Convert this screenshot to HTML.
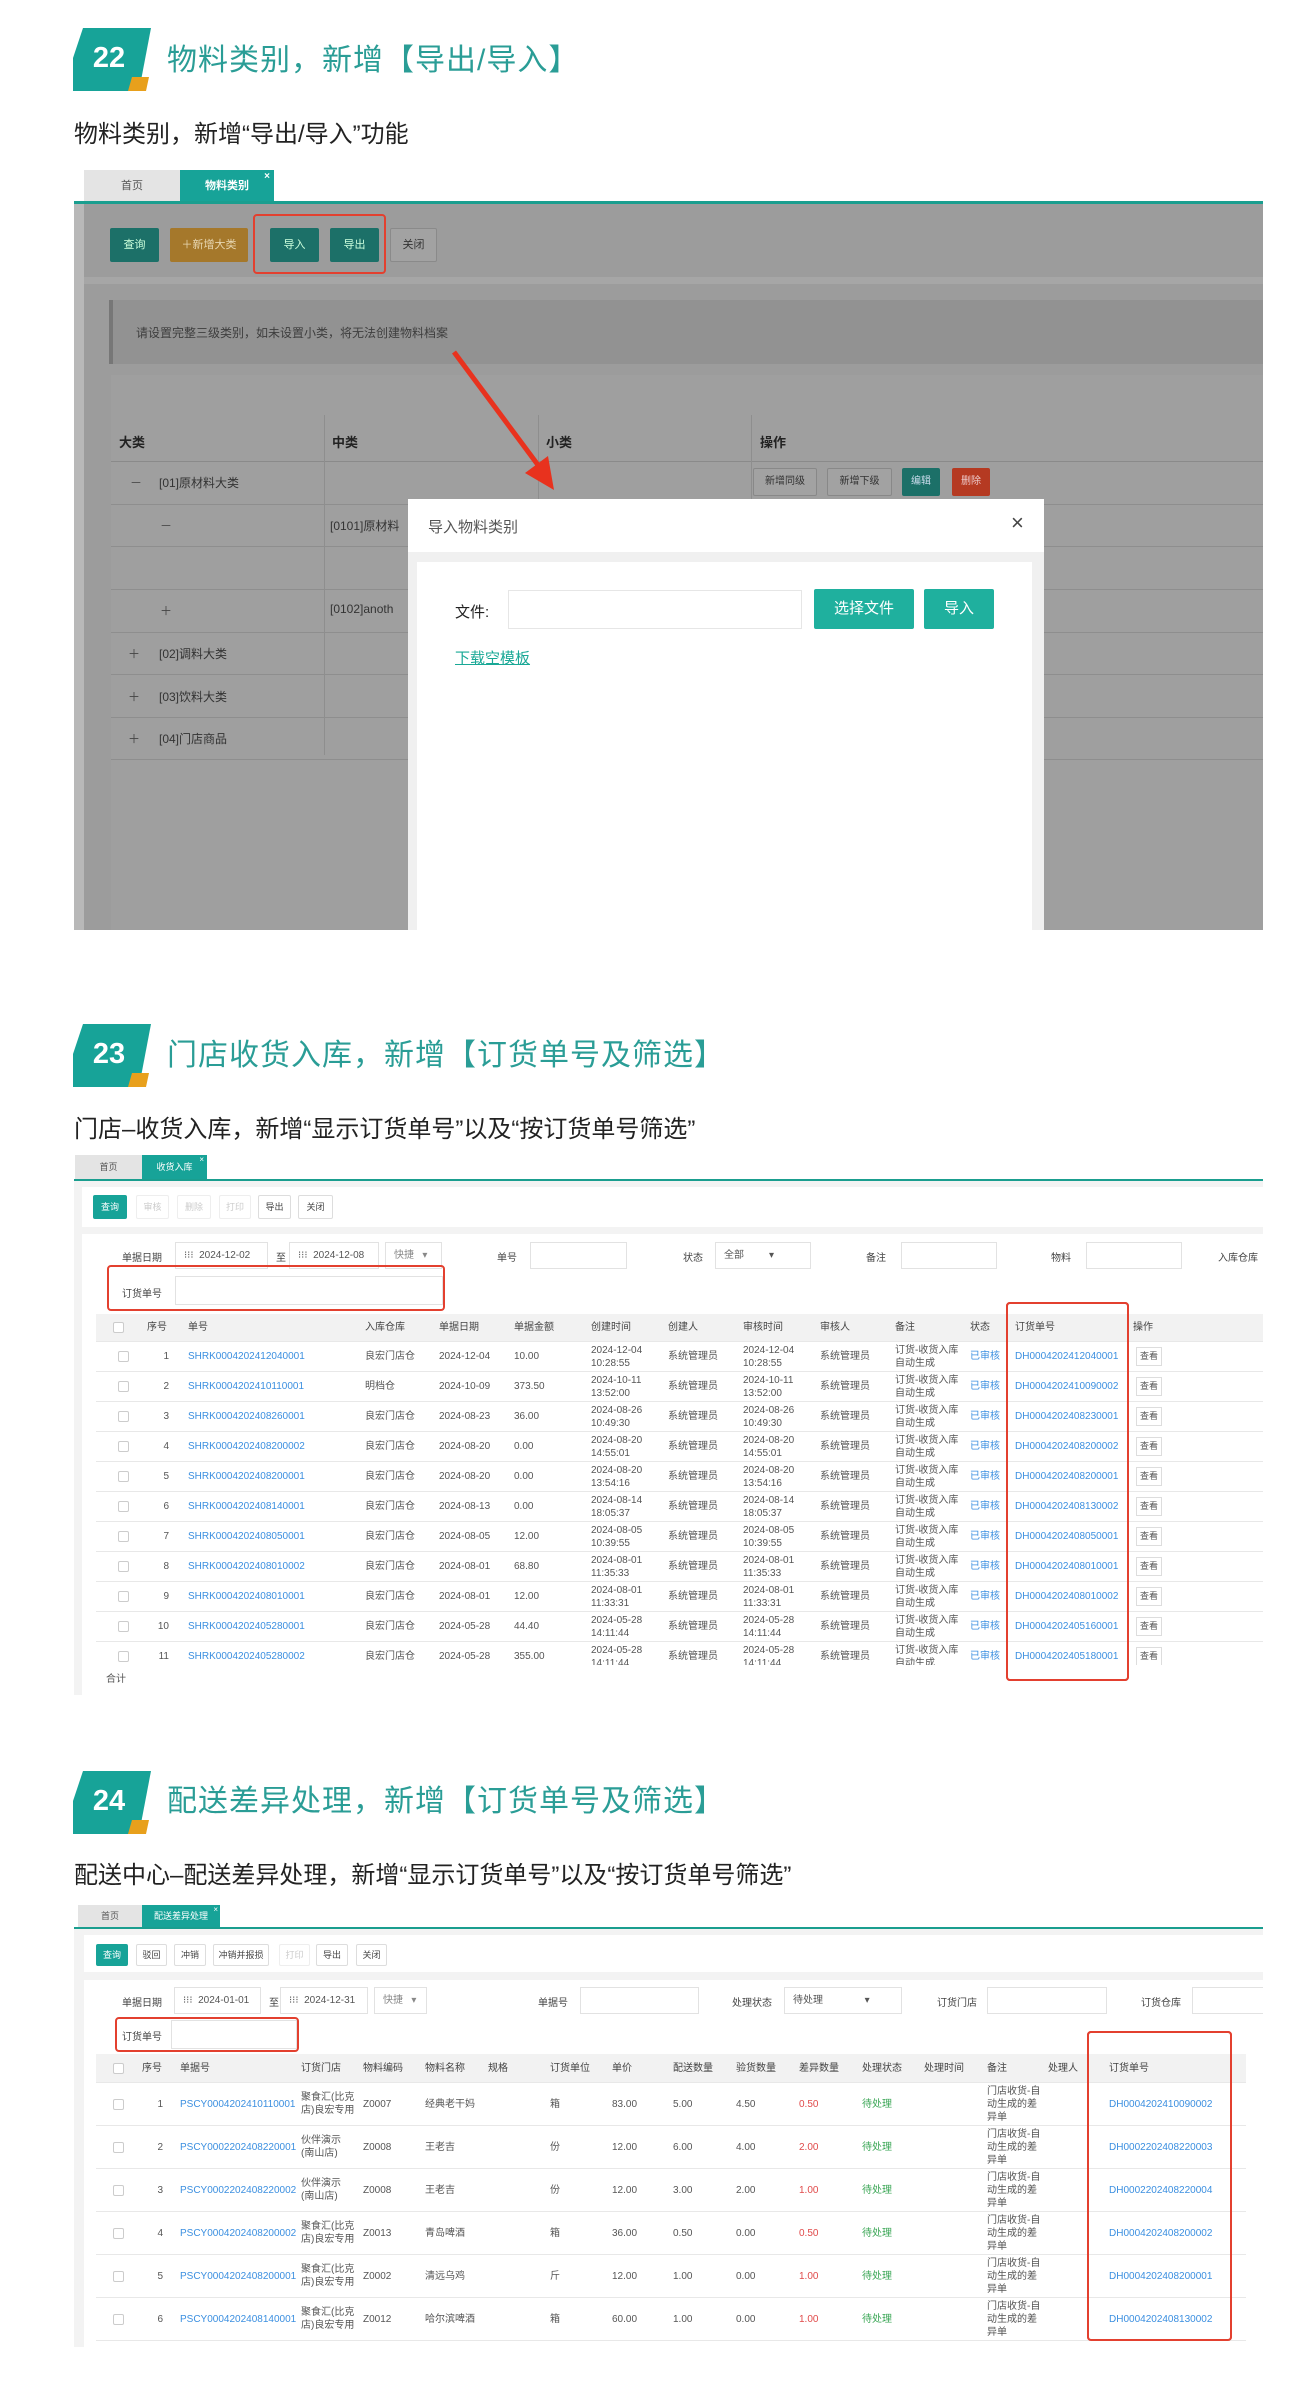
<!DOCTYPE html>
<html><head><meta charset="utf-8">
<style>
*{margin:0;padding:0;box-sizing:border-box}
body{width:1305px;height:2391px;background:#fff;position:relative;overflow:hidden;font-family:"Liberation Sans","Noto Sans CJK SC",sans-serif;color:#333}
.a{position:absolute;white-space:nowrap}
.badge{position:absolute;width:78px;height:63px}
.badge .t{position:absolute;left:0;top:0;width:78px;height:63px;background:#17a398;clip-path:polygon(10px 0,78px 0,66px 63px,0 63px,0 30px)}
.badge .o{position:absolute;left:55px;top:49px;width:21px;height:14px;background:#e8a01c;clip-path:polygon(4px 0,21px 0,18px 14px,0 14px)}
.badge span{position:absolute;left:0;width:72px;top:14px;text-align:center;color:#fff;font-weight:bold;font-size:29px}
.title{position:absolute;left:167px;font-size:30px;color:#2a9d96;letter-spacing:1px;white-space:nowrap;line-height:36px}
.sub{position:absolute;left:74px;font-size:24px;color:#222;white-space:nowrap;line-height:30px}
.tab{position:absolute;font-size:11px;text-align:center;color:#555;background:#e4e4e4}
.tab.on{background:#17a398;color:#fff}
.btn{position:absolute;font-size:11px;text-align:center;border:1px solid #ddd;background:#fff;color:#444;border-radius:2px}
.red{position:absolute;border:2px solid #e3402f;border-radius:4px}
.row{position:absolute;display:grid;align-items:center;font-size:10px;color:#555;border-bottom:1px solid #e8e8e8;line-height:13px}
.row>div{padding-left:5px;overflow:hidden;white-space:nowrap}
.lk{color:#3b8fe0}
.cb{width:11px;height:11px;border:1px solid #ccc;border-radius:2px;background:#fff;margin-left:17px}
.inp{position:absolute;border:1px solid #e2e2e2;background:#fff;font-size:10px;color:#555;padding-left:8px}
.lab{position:absolute;font-size:10px;color:#444;white-space:nowrap}
.g{color:#3aa655}.r{color:#e04a4a}
.vb{border:1px solid #ddd;font-size:9px;padding:2px 3px!important;background:#fff;display:inline-block;margin-left:3px}
</style></head><body>

<!-- ===== Section 22 ===== -->
<div class="badge" style="left:73px;top:28px"><div class="t"></div><div class="o"></div><span>22</span></div>
<div class="title" style="top:43px">物料类别，新增【导出/导入】</div>
<div class="sub" style="top:120px">物料类别，新增“导出/导入”功能</div>

<div class="tab" style="left:84px;top:170px;width:96px;height:33px;line-height:33px">首页</div>
<div class="tab on" style="left:180px;top:170px;width:94px;height:33px;line-height:33px;font-weight:bold">物料类别<span style="position:absolute;right:4px;top:-10px;font-size:10px">×</span></div>
<div class="a" style="left:74px;top:201px;width:1189px;height:3px;background:#1a9e8f"></div>
<div class="a" style="left:74px;top:204px;width:1189px;height:726px;background:#9c9c9c"></div>
<div class="a" style="left:74px;top:204px;width:10px;height:726px;background:#b8b8b8"></div>
<div class="a" style="left:84px;top:277px;width:1179px;height:7px;background:#a6a6a6"></div>
<div class="btn" style="left:110px;top:228px;width:49px;height:34px;line-height:32px;background:#1c7068;border-color:#1c7068;color:#cfd">查询</div>
<div class="btn" style="left:170px;top:228px;width:78px;height:34px;line-height:32px;background:#a5782b;border-color:#a5782b;color:#e7d6b0">＋新增大类</div>
<div class="btn" style="left:270px;top:228px;width:49px;height:34px;line-height:32px;background:#1c7068;border-color:#1c7068;color:#cfd">导入</div>
<div class="btn" style="left:330px;top:228px;width:49px;height:34px;line-height:32px;background:#1c7068;border-color:#1c7068;color:#cfd">导出</div>
<div class="btn" style="left:390px;top:228px;width:47px;height:34px;line-height:32px;background:#a2a2a2;border-color:#8a8a8a;color:#333">关闭</div>
<div class="red" style="left:253px;top:214px;width:133px;height:60px"></div>
<div class="a" style="left:109px;top:300px;width:1154px;height:64px;background:#929292;border-left:4px solid #777"></div>
<div class="a" style="left:136px;top:324px;font-size:12px;color:#3e3e3e">请设置完整三级类别，如未设置小类，将无法创建物料档案</div>
<div class="a" style="left:111px;top:375px;width:1152px;height:555px;background:#9f9f9f"></div>
<div class="a" style="left:111px;top:461px;width:1152px;height:1px;background:#8a8a8a"></div>
<div class="a" style="left:324px;top:415px;width:1px;height:340px;background:#8e8e8e"></div>
<div class="a" style="left:538px;top:415px;width:1px;height:90px;background:#8e8e8e"></div>
<div class="a" style="left:751px;top:415px;width:1px;height:90px;background:#8e8e8e"></div>
<div class="a" style="left:119px;top:432px;font-size:13px;font-weight:bold;color:#222">大类</div>
<div class="a" style="left:332px;top:432px;font-size:13px;font-weight:bold;color:#222">中类</div>
<div class="a" style="left:546px;top:432px;font-size:13px;font-weight:bold;color:#222">小类</div>
<div class="a" style="left:760px;top:432px;font-size:13px;font-weight:bold;color:#222">操作</div>
<div class="a" style="left:111px;top:504px;width:1152px;height:1px;background:#8e8e8e"></div>
<div class="a" style="left:111px;top:546px;width:1152px;height:1px;background:#8e8e8e"></div>
<div class="a" style="left:111px;top:589px;width:1152px;height:1px;background:#8e8e8e"></div>
<div class="a" style="left:111px;top:632px;width:1152px;height:1px;background:#8e8e8e"></div>
<div class="a" style="left:111px;top:674px;width:1152px;height:1px;background:#8e8e8e"></div>
<div class="a" style="left:111px;top:717px;width:1152px;height:1px;background:#8e8e8e"></div>
<div class="a" style="left:111px;top:759px;width:1152px;height:1px;background:#8e8e8e"></div>
<div class="a" style="left:130px;top:474px;font-size:12px;color:#444">－</div><div class="a" style="left:159px;top:474px;font-size:12px;color:#333">[01]原材料大类</div>
<div class="a" style="left:160px;top:517px;font-size:12px;color:#444">－</div><div class="a" style="left:330px;top:517px;font-size:12px;color:#333">[0101]原材料</div>
<div class="a" style="left:160px;top:602px;font-size:12px;color:#444">＋</div><div class="a" style="left:330px;top:602px;font-size:12px;color:#333">[0102]anoth</div>
<div class="a" style="left:128px;top:645px;font-size:12px;color:#444">＋</div><div class="a" style="left:159px;top:645px;font-size:12px;color:#333">[02]调料大类</div>
<div class="a" style="left:128px;top:688px;font-size:12px;color:#444">＋</div><div class="a" style="left:159px;top:688px;font-size:12px;color:#333">[03]饮料大类</div>
<div class="a" style="left:128px;top:730px;font-size:12px;color:#444">＋</div><div class="a" style="left:159px;top:730px;font-size:12px;color:#333">[04]门店商品</div>
<div class="btn" style="left:753px;top:468px;width:64px;height:28px;line-height:26px;background:#a2a2a2;border-color:#888;color:#333;font-size:10px">新增同级</div>
<div class="btn" style="left:827px;top:468px;width:65px;height:28px;line-height:26px;background:#a2a2a2;border-color:#888;color:#333;font-size:10px">新增下级</div>
<div class="btn" style="left:902px;top:468px;width:38px;height:28px;line-height:26px;background:#1c7068;border-color:#1c7068;color:#cde;font-size:10px">编辑</div>
<div class="btn" style="left:952px;top:468px;width:38px;height:28px;line-height:26px;background:#b53a22;border-color:#b53a22;color:#ecc;font-size:10px">删除</div>
<svg class="a" style="left:0;top:0" width="1305" height="940">
<line x1="454" y1="352" x2="538" y2="465" stroke="#e8321e" stroke-width="5"/>
<polygon points="554,490 525,473 548,456" fill="#e8321e"/>
</svg>
<!-- modal -->
<div class="a" style="left:408px;top:499px;width:636px;height:431px;background:#f0f0f0"></div>
<div class="a" style="left:408px;top:499px;width:636px;height:53px;background:#fff"></div>
<div class="a" style="left:428px;top:516px;font-size:15px;color:#555">导入物料类别</div>
<div class="a" style="left:1011px;top:510px;font-size:22px;color:#444">×</div>
<div class="a" style="left:417px;top:562px;width:615px;height:368px;background:#fff"></div>
<div class="a" style="left:455px;top:601px;font-size:15px;color:#222">文件:</div>
<div class="a" style="left:508px;top:590px;width:294px;height:39px;border:1px solid #e6e6e6;background:#fff"></div>
<div class="btn" style="left:814px;top:589px;width:100px;height:40px;line-height:38px;background:#1fb09e;border-color:#1fb09e;color:#fff;font-size:15px">选择文件</div>
<div class="btn" style="left:924px;top:589px;width:70px;height:40px;line-height:38px;background:#1fb09e;border-color:#1fb09e;color:#fff;font-size:15px">导入</div>
<div class="a" style="left:455px;top:647px;font-size:15px;color:#19a896;text-decoration:underline">下载空模板</div>

<!-- ===== Section 23 ===== -->
<div class="badge" style="left:73px;top:1024px"><div class="t"></div><div class="o"></div><span>23</span></div>
<div class="title" style="top:1038px">门店收货入库，新增【订货单号及筛选】</div>
<div class="sub" style="top:1115px">门店–收货入库，新增“显示订货单号”以及“按订货单号筛选”</div>

<div style="position:absolute;left:0;top:0;width:1305px;height:2391px;clip-path:inset(1150px 42px 696px 74px)">
<div class="a" style="left:74px;top:1181px;width:1189px;height:520px;background:#f3f3f3"></div>
<div class="tab" style="left:75px;top:1155px;width:67px;height:24px;line-height:24px;font-size:9px">首页</div>
<div class="tab on" style="left:142px;top:1155px;width:65px;height:24px;line-height:24px;font-size:9px">收货入库<span style="position:absolute;right:3px;top:-7px;font-size:8px">×</span></div>
<div class="a" style="left:74px;top:1179px;width:1189px;height:2px;background:#1a9e8f"></div>
<div class="a" style="left:82px;top:1187px;width:1181px;height:40px;background:#fff"></div>
<div class="btn" style="left:93px;top:1195px;width:34px;height:24px;line-height:22px;background:#17a398;border-color:#17a398;color:#fff;font-size:9px">查询</div>
<div class="btn" style="left:136px;top:1195px;width:33px;height:24px;line-height:22px;color:#ccc;border-color:#eee;font-size:9px">审核</div>
<div class="btn" style="left:177px;top:1195px;width:34px;height:24px;line-height:22px;color:#ccc;border-color:#eee;font-size:9px">删除</div>
<div class="btn" style="left:219px;top:1195px;width:32px;height:24px;line-height:22px;color:#ccc;border-color:#eee;font-size:9px">打印</div>
<div class="btn" style="left:258px;top:1195px;width:33px;height:24px;line-height:22px;font-size:9px">导出</div>
<div class="btn" style="left:298px;top:1195px;width:35px;height:24px;line-height:22px;font-size:9px">关闭</div>
<div class="a" style="left:82px;top:1234px;width:1181px;height:470px;background:#fff"></div>
<div class="lab" style="left:122px;top:1249px">单据日期</div>
<div class="inp" style="left:175px;top:1242px;width:93px;height:27px;line-height:25px">⁝⁝⁝ &nbsp;2024-12-02</div>
<div class="lab" style="left:276px;top:1249px">至</div>
<div class="inp" style="left:289px;top:1242px;width:90px;height:27px;line-height:25px">⁝⁝⁝ &nbsp;2024-12-08</div>
<div class="inp" style="left:385px;top:1242px;width:57px;height:27px;line-height:25px;color:#888">快捷 &nbsp; ▾</div>
<div class="lab" style="left:497px;top:1249px">单号</div>
<div class="inp" style="left:530px;top:1242px;width:97px;height:27px"></div>
<div class="lab" style="left:683px;top:1249px">状态</div>
<div class="inp" style="left:715px;top:1242px;width:96px;height:27px;line-height:25px">全部 &nbsp; &nbsp; &nbsp; &nbsp; ▾</div>
<div class="lab" style="left:866px;top:1249px">备注</div>
<div class="inp" style="left:901px;top:1242px;width:96px;height:27px"></div>
<div class="lab" style="left:1051px;top:1249px">物料</div>
<div class="inp" style="left:1086px;top:1242px;width:96px;height:27px"></div>
<div class="lab" style="left:1218px;top:1249px">入库仓库</div>
<div class="lab" style="left:122px;top:1285px">订货单号</div>
<div class="inp" style="left:175px;top:1276px;width:268px;height:29px"></div>
<div class="red" style="left:107px;top:1265px;width:338px;height:46px"></div>

<div class="row" style="left:96px;top:1314px;width:1167px;height:28px;background:#f2f2f2;color:#444;grid-template-columns:46px 41px 177px 74px 75px 77px 77px 75px 77px 75px 75px 45px 118px 135px"><div><div class="cb" style="margin-left:12px"></div></div><div>序号</div><div>单号</div><div>入库仓库</div><div>单据日期</div><div>单据金额</div><div>创建时间</div><div>创建人</div><div>审核时间</div><div>审核人</div><div>备注</div><div>状态</div><div>订货单号</div><div>操作</div></div>
<div id="t23"></div>
<div class="a" style="left:96px;top:1670px;font-size:10px;color:#555;left:106px">合计</div>
</div>
<div class="red" style="left:1006px;top:1302px;width:123px;height:379px"></div>

<!-- ===== Section 24 ===== -->
<div class="badge" style="left:73px;top:1771px"><div class="t"></div><div class="o"></div><span>24</span></div>
<div class="title" style="top:1784px">配送差异处理，新增【订货单号及筛选】</div>
<div class="sub" style="top:1861px">配送中心–配送差异处理，新增“显示订货单号”以及“按订货单号筛选”</div>

<div style="position:absolute;left:0;top:0;width:1305px;height:2391px;clip-path:inset(1900px 42px 44px 74px)">
<div class="a" style="left:74px;top:1929px;width:1189px;height:420px;background:#f3f3f3"></div>
<div class="tab" style="left:78px;top:1905px;width:64px;height:23px;line-height:23px;font-size:9px">首页</div>
<div class="tab on" style="left:142px;top:1905px;width:78px;height:23px;line-height:23px;font-size:9px">配送差异处理<span style="position:absolute;right:2px;top:-7px;font-size:8px">×</span></div>
<div class="a" style="left:74px;top:1927px;width:1189px;height:2px;background:#1a9e8f"></div>
<div class="a" style="left:84px;top:1935px;width:1179px;height:37px;background:#fff"></div>
<div class="btn" style="left:96px;top:1944px;width:32px;height:22px;line-height:20px;background:#17a398;border-color:#17a398;color:#fff;font-size:9px">查询</div>
<div class="btn" style="left:136px;top:1944px;width:31px;height:22px;line-height:20px;font-size:9px">驳回</div>
<div class="btn" style="left:174px;top:1944px;width:32px;height:22px;line-height:20px;font-size:9px">冲销</div>
<div class="btn" style="left:213px;top:1944px;width:56px;height:22px;line-height:20px;font-size:9px">冲销并报损</div>
<div class="btn" style="left:279px;top:1944px;width:31px;height:22px;line-height:20px;font-size:9px;color:#ccc;border-color:#eee">打印</div>
<div class="btn" style="left:316px;top:1944px;width:32px;height:22px;line-height:20px;font-size:9px">导出</div>
<div class="btn" style="left:356px;top:1944px;width:31px;height:22px;line-height:20px;font-size:9px">关闭</div>
<div class="a" style="left:84px;top:1980px;width:1179px;height:380px;background:#fff"></div>
<div class="lab" style="left:122px;top:1994px">单据日期</div>
<div class="inp" style="left:174px;top:1987px;width:87px;height:27px;line-height:25px">⁝⁝⁝ &nbsp;2024-01-01</div>
<div class="lab" style="left:269px;top:1994px">至</div>
<div class="inp" style="left:280px;top:1987px;width:88px;height:27px;line-height:25px">⁝⁝⁝ &nbsp;2024-12-31</div>
<div class="inp" style="left:374px;top:1987px;width:53px;height:27px;line-height:25px;color:#888">快捷 &nbsp; ▾</div>
<div class="lab" style="left:538px;top:1994px">单据号</div>
<div class="inp" style="left:580px;top:1987px;width:119px;height:27px"></div>
<div class="lab" style="left:732px;top:1994px">处理状态</div>
<div class="inp" style="left:784px;top:1987px;width:118px;height:27px;line-height:25px">待处理 &nbsp; &nbsp; &nbsp; &nbsp; &nbsp; &nbsp; &nbsp; ▾</div>
<div class="lab" style="left:937px;top:1994px">订货门店</div>
<div class="inp" style="left:987px;top:1987px;width:120px;height:27px"></div>
<div class="lab" style="left:1141px;top:1994px">订货仓库</div>
<div class="inp" style="left:1192px;top:1987px;width:80px;height:27px"></div>
<div class="lab" style="left:122px;top:2028px">订货单号</div>
<div class="inp" style="left:171px;top:2020px;width:126px;height:29px"></div>
<div class="red" style="left:115px;top:2017px;width:184px;height:35px"></div>
<div class="row" style="left:96px;top:2054px;width:1150px;height:29px;background:#f2f2f2;color:#444;grid-template-columns:41px 38px 121px 62px 62px 63px 62px 62px 61px 63px 63px 63px 62px 63px 61px 46px 159px"><div><div class="cb" style="margin-left:12px"></div></div><div>序号</div><div>单据号</div><div>订货门店</div><div>物料编码</div><div>物料名称</div><div>规格</div><div>订货单位</div><div>单价</div><div>配送数量</div><div>验货数量</div><div>差异数量</div><div>处理状态</div><div>处理时间</div><div>备注</div><div>处理人</div><div style="padding-left:20px">订货单号</div></div>
<div id="t24"></div>
</div>
<div class="red" style="left:1087px;top:2031px;width:145px;height:310px"></div>

<div class="a" style="display:none"></div>
<!-- rows below -->
<div style="position:absolute;left:0;top:0;width:1305px;height:2391px;clip-path:inset(1342px 42px 726px 74px)">
<div class="row" style="left:96px;top:1342px;width:1167px;height:30px;grid-template-columns:46px 41px 177px 74px 75px 77px 77px 75px 77px 75px 75px 45px 118px 135px"><div><div class="cb"></div></div><div style="text-align:right;padding-right:14px">1</div><div class="lk">SHRK0004202412040001</div><div>良宏门店仓</div><div>2024-12-04</div><div>10.00</div><div>2024-12-04<br>10:28:55</div><div>系统管理员</div><div>2024-12-04<br>10:28:55</div><div>系统管理员</div><div>订货-收货入库<br>自动生成</div><div class="lk">已审核</div><div class="lk">DH0004202412040001</div><div><span class="vb">查看</span></div></div>
<div class="row" style="left:96px;top:1372px;width:1167px;height:30px;grid-template-columns:46px 41px 177px 74px 75px 77px 77px 75px 77px 75px 75px 45px 118px 135px"><div><div class="cb"></div></div><div style="text-align:right;padding-right:14px">2</div><div class="lk">SHRK0004202410110001</div><div>明档仓</div><div>2024-10-09</div><div>373.50</div><div>2024-10-11<br>13:52:00</div><div>系统管理员</div><div>2024-10-11<br>13:52:00</div><div>系统管理员</div><div>订货-收货入库<br>自动生成</div><div class="lk">已审核</div><div class="lk">DH0004202410090002</div><div><span class="vb">查看</span></div></div>
<div class="row" style="left:96px;top:1402px;width:1167px;height:30px;grid-template-columns:46px 41px 177px 74px 75px 77px 77px 75px 77px 75px 75px 45px 118px 135px"><div><div class="cb"></div></div><div style="text-align:right;padding-right:14px">3</div><div class="lk">SHRK0004202408260001</div><div>良宏门店仓</div><div>2024-08-23</div><div>36.00</div><div>2024-08-26<br>10:49:30</div><div>系统管理员</div><div>2024-08-26<br>10:49:30</div><div>系统管理员</div><div>订货-收货入库<br>自动生成</div><div class="lk">已审核</div><div class="lk">DH0004202408230001</div><div><span class="vb">查看</span></div></div>
<div class="row" style="left:96px;top:1432px;width:1167px;height:30px;grid-template-columns:46px 41px 177px 74px 75px 77px 77px 75px 77px 75px 75px 45px 118px 135px"><div><div class="cb"></div></div><div style="text-align:right;padding-right:14px">4</div><div class="lk">SHRK0004202408200002</div><div>良宏门店仓</div><div>2024-08-20</div><div>0.00</div><div>2024-08-20<br>14:55:01</div><div>系统管理员</div><div>2024-08-20<br>14:55:01</div><div>系统管理员</div><div>订货-收货入库<br>自动生成</div><div class="lk">已审核</div><div class="lk">DH0004202408200002</div><div><span class="vb">查看</span></div></div>
<div class="row" style="left:96px;top:1462px;width:1167px;height:30px;grid-template-columns:46px 41px 177px 74px 75px 77px 77px 75px 77px 75px 75px 45px 118px 135px"><div><div class="cb"></div></div><div style="text-align:right;padding-right:14px">5</div><div class="lk">SHRK0004202408200001</div><div>良宏门店仓</div><div>2024-08-20</div><div>0.00</div><div>2024-08-20<br>13:54:16</div><div>系统管理员</div><div>2024-08-20<br>13:54:16</div><div>系统管理员</div><div>订货-收货入库<br>自动生成</div><div class="lk">已审核</div><div class="lk">DH0004202408200001</div><div><span class="vb">查看</span></div></div>
<div class="row" style="left:96px;top:1492px;width:1167px;height:30px;grid-template-columns:46px 41px 177px 74px 75px 77px 77px 75px 77px 75px 75px 45px 118px 135px"><div><div class="cb"></div></div><div style="text-align:right;padding-right:14px">6</div><div class="lk">SHRK0004202408140001</div><div>良宏门店仓</div><div>2024-08-13</div><div>0.00</div><div>2024-08-14<br>18:05:37</div><div>系统管理员</div><div>2024-08-14<br>18:05:37</div><div>系统管理员</div><div>订货-收货入库<br>自动生成</div><div class="lk">已审核</div><div class="lk">DH0004202408130002</div><div><span class="vb">查看</span></div></div>
<div class="row" style="left:96px;top:1522px;width:1167px;height:30px;grid-template-columns:46px 41px 177px 74px 75px 77px 77px 75px 77px 75px 75px 45px 118px 135px"><div><div class="cb"></div></div><div style="text-align:right;padding-right:14px">7</div><div class="lk">SHRK0004202408050001</div><div>良宏门店仓</div><div>2024-08-05</div><div>12.00</div><div>2024-08-05<br>10:39:55</div><div>系统管理员</div><div>2024-08-05<br>10:39:55</div><div>系统管理员</div><div>订货-收货入库<br>自动生成</div><div class="lk">已审核</div><div class="lk">DH0004202408050001</div><div><span class="vb">查看</span></div></div>
<div class="row" style="left:96px;top:1552px;width:1167px;height:30px;grid-template-columns:46px 41px 177px 74px 75px 77px 77px 75px 77px 75px 75px 45px 118px 135px"><div><div class="cb"></div></div><div style="text-align:right;padding-right:14px">8</div><div class="lk">SHRK0004202408010002</div><div>良宏门店仓</div><div>2024-08-01</div><div>68.80</div><div>2024-08-01<br>11:35:33</div><div>系统管理员</div><div>2024-08-01<br>11:35:33</div><div>系统管理员</div><div>订货-收货入库<br>自动生成</div><div class="lk">已审核</div><div class="lk">DH0004202408010001</div><div><span class="vb">查看</span></div></div>
<div class="row" style="left:96px;top:1582px;width:1167px;height:30px;grid-template-columns:46px 41px 177px 74px 75px 77px 77px 75px 77px 75px 75px 45px 118px 135px"><div><div class="cb"></div></div><div style="text-align:right;padding-right:14px">9</div><div class="lk">SHRK0004202408010001</div><div>良宏门店仓</div><div>2024-08-01</div><div>12.00</div><div>2024-08-01<br>11:33:31</div><div>系统管理员</div><div>2024-08-01<br>11:33:31</div><div>系统管理员</div><div>订货-收货入库<br>自动生成</div><div class="lk">已审核</div><div class="lk">DH0004202408010002</div><div><span class="vb">查看</span></div></div>
<div class="row" style="left:96px;top:1612px;width:1167px;height:30px;grid-template-columns:46px 41px 177px 74px 75px 77px 77px 75px 77px 75px 75px 45px 118px 135px"><div><div class="cb"></div></div><div style="text-align:right;padding-right:14px">10</div><div class="lk">SHRK0004202405280001</div><div>良宏门店仓</div><div>2024-05-28</div><div>44.40</div><div>2024-05-28<br>14:11:44</div><div>系统管理员</div><div>2024-05-28<br>14:11:44</div><div>系统管理员</div><div>订货-收货入库<br>自动生成</div><div class="lk">已审核</div><div class="lk">DH0004202405160001</div><div><span class="vb">查看</span></div></div>
<div class="row" style="left:96px;top:1642px;width:1167px;height:30px;grid-template-columns:46px 41px 177px 74px 75px 77px 77px 75px 77px 75px 75px 45px 118px 135px"><div><div class="cb"></div></div><div style="text-align:right;padding-right:14px">11</div><div class="lk">SHRK0004202405280002</div><div>良宏门店仓</div><div>2024-05-28</div><div>355.00</div><div>2024-05-28<br>14:11:44</div><div>系统管理员</div><div>2024-05-28<br>14:11:44</div><div>系统管理员</div><div>订货-收货入库<br>自动生成</div><div class="lk">已审核</div><div class="lk">DH0004202405180001</div><div><span class="vb">查看</span></div></div>
</div>

<div style="position:absolute;left:0;top:0;width:1305px;height:2391px;clip-path:inset(2083px 42px 44px 74px)">
<div class="row" style="left:96px;top:2083px;width:1150px;height:43px;grid-template-columns:41px 38px 121px 62px 62px 63px 62px 62px 61px 63px 63px 63px 62px 63px 61px 46px 159px"><div><div class="cb" style="margin-left:12px"></div></div><div style="text-align:right;padding-right:12px">1</div><div class="lk">PSCY0004202410110001</div><div>聚食汇(比克<br>店)良宏专用</div><div>Z0007</div><div>经典老干妈</div><div></div><div>箱</div><div>83.00</div><div>5.00</div><div>4.50</div><div class="r">0.50</div><div class="g">待处理</div><div></div><div>门店收货-自<br>动生成的差<br>异单</div><div></div><div class="lk" style="padding-left:20px">DH0004202410090002</div></div>
<div class="row" style="left:96px;top:2126px;width:1150px;height:43px;grid-template-columns:41px 38px 121px 62px 62px 63px 62px 62px 61px 63px 63px 63px 62px 63px 61px 46px 159px"><div><div class="cb" style="margin-left:12px"></div></div><div style="text-align:right;padding-right:12px">2</div><div class="lk">PSCY0002202408220001</div><div>伙伴演示<br>(南山店)</div><div>Z0008</div><div>王老吉</div><div></div><div>份</div><div>12.00</div><div>6.00</div><div>4.00</div><div class="r">2.00</div><div class="g">待处理</div><div></div><div>门店收货-自<br>动生成的差<br>异单</div><div></div><div class="lk" style="padding-left:20px">DH0002202408220003</div></div>
<div class="row" style="left:96px;top:2169px;width:1150px;height:43px;grid-template-columns:41px 38px 121px 62px 62px 63px 62px 62px 61px 63px 63px 63px 62px 63px 61px 46px 159px"><div><div class="cb" style="margin-left:12px"></div></div><div style="text-align:right;padding-right:12px">3</div><div class="lk">PSCY0002202408220002</div><div>伙伴演示<br>(南山店)</div><div>Z0008</div><div>王老吉</div><div></div><div>份</div><div>12.00</div><div>3.00</div><div>2.00</div><div class="r">1.00</div><div class="g">待处理</div><div></div><div>门店收货-自<br>动生成的差<br>异单</div><div></div><div class="lk" style="padding-left:20px">DH0002202408220004</div></div>
<div class="row" style="left:96px;top:2212px;width:1150px;height:43px;grid-template-columns:41px 38px 121px 62px 62px 63px 62px 62px 61px 63px 63px 63px 62px 63px 61px 46px 159px"><div><div class="cb" style="margin-left:12px"></div></div><div style="text-align:right;padding-right:12px">4</div><div class="lk">PSCY0004202408200002</div><div>聚食汇(比克<br>店)良宏专用</div><div>Z0013</div><div>青岛啤酒</div><div></div><div>箱</div><div>36.00</div><div>0.50</div><div>0.00</div><div class="r">0.50</div><div class="g">待处理</div><div></div><div>门店收货-自<br>动生成的差<br>异单</div><div></div><div class="lk" style="padding-left:20px">DH0004202408200002</div></div>
<div class="row" style="left:96px;top:2255px;width:1150px;height:43px;grid-template-columns:41px 38px 121px 62px 62px 63px 62px 62px 61px 63px 63px 63px 62px 63px 61px 46px 159px"><div><div class="cb" style="margin-left:12px"></div></div><div style="text-align:right;padding-right:12px">5</div><div class="lk">PSCY0004202408200001</div><div>聚食汇(比克<br>店)良宏专用</div><div>Z0002</div><div>清远乌鸡</div><div></div><div>斤</div><div>12.00</div><div>1.00</div><div>0.00</div><div class="r">1.00</div><div class="g">待处理</div><div></div><div>门店收货-自<br>动生成的差<br>异单</div><div></div><div class="lk" style="padding-left:20px">DH0004202408200001</div></div>
<div class="row" style="left:96px;top:2298px;width:1150px;height:43px;grid-template-columns:41px 38px 121px 62px 62px 63px 62px 62px 61px 63px 63px 63px 62px 63px 61px 46px 159px"><div><div class="cb" style="margin-left:12px"></div></div><div style="text-align:right;padding-right:12px">6</div><div class="lk">PSCY0004202408140001</div><div>聚食汇(比克<br>店)良宏专用</div><div>Z0012</div><div>哈尔滨啤酒</div><div></div><div>箱</div><div>60.00</div><div>1.00</div><div>0.00</div><div class="r">1.00</div><div class="g">待处理</div><div></div><div>门店收货-自<br>动生成的差<br>异单</div><div></div><div class="lk" style="padding-left:20px">DH0004202408130002</div></div>
<div class="row" style="left:96px;top:2341px;width:1150px;height:43px;grid-template-columns:41px 38px 121px 62px 62px 63px 62px 62px 61px 63px 63px 63px 62px 63px 61px 46px 159px"><div></div><div></div><div></div><div></div><div></div><div></div><div></div><div></div><div></div><div></div><div></div><div></div><div></div><div></div><div>门店收货-自</div><div></div><div></div></div>
</div>
<div class="red" style="left:1087px;top:2031px;width:145px;height:310px"></div>
<div class="red" style="left:1006px;top:1302px;width:123px;height:379px"></div>
</body></html>
